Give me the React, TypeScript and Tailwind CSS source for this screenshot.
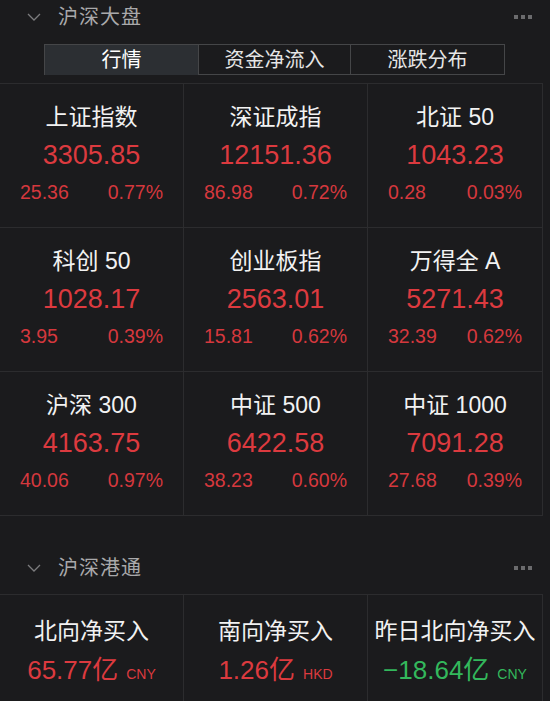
import React from 'react';

const FONT = '"Liberation Sans", "Noto Sans CJK SC", sans-serif';

const indices = [
  { name: '上证指数', value: '3305.85', chg: '25.36', pct: '0.77%' },
  { name: '深证成指', value: '12151.36', chg: '86.98', pct: '0.72%' },
  { name: '北证 50', value: '1043.23', chg: '0.28', pct: '0.03%' },
  { name: '科创 50', value: '1028.17', chg: '3.95', pct: '0.39%' },
  { name: '创业板指', value: '2563.01', chg: '15.81', pct: '0.62%' },
  { name: '万得全 A', value: '5271.43', chg: '32.39', pct: '0.62%' },
  { name: '沪深 300', value: '4163.75', chg: '40.06', pct: '0.97%' },
  { name: '中证 500', value: '6422.58', chg: '38.23', pct: '0.60%' },
  { name: '中证 1000', value: '7091.28', chg: '27.68', pct: '0.39%' },
];

const flows = [
  { name: '北向净买入', value: '65.77亿', unit: 'CNY', up: true },
  { name: '南向净买入', value: '1.26亿', unit: 'HKD', up: true },
  { name: '昨日北向净买入', value: '−18.64亿', unit: 'CNY', up: false },
];

const Chevron = () => (
  <svg width="14" height="8" viewBox="0 0 14 8" fill="none">
    <path d="M1 1 L7 7 L13 1" stroke="#7c7c7e" strokeWidth="1.3" />
  </svg>
);

const Dots = () => (
  <div className="flex gap-[3px]">
    <span className="w-[4px] h-[4px] bg-[#6b6b6d]" />
    <span className="w-[4px] h-[4px] bg-[#6b6b6d]" />
    <span className="w-[4px] h-[4px] bg-[#6b6b6d]" />
  </div>
);

const SectionHeader = ({ title }: { title: string }) => (
  <div className="flex items-center h-[34px] pl-[27px] pr-[18px]">
    <Chevron />
    <span className="ml-[17px] text-[20px] text-[#a9a9ab] tracking-[1px]">{title}</span>
    <div className="ml-auto">
      <Dots />
    </div>
  </div>
);

export default function App() {
  return (
    <div className="w-[550px] h-[701px] overflow-hidden bg-[#1b1b1d]" style={{ fontFamily: FONT }}>
      <SectionHeader title="沪深大盘" />

      <div className="mt-[10px] ml-[44px] w-[461px] h-[31px] grid grid-cols-3 border border-[#454648]">
        <div className="flex items-center justify-center bg-[#2c2f33] text-[20px] text-white">行情</div>
        <div className="flex items-center justify-center border-x border-[#454648] text-[20px] text-[#e6e6e6]">资金净流入</div>
        <div className="flex items-center justify-center text-[20px] text-[#e6e6e6]">涨跌分布</div>
      </div>

      <div className="mt-[8px] w-[543px] grid grid-cols-[183px_183px_1fr] gap-px bg-[#2c2c2e] border-y border-r border-[#2c2c2e]">
        {indices.map((it) => (
          <div key={it.name} className="h-[143px] bg-[#1b1b1d] flex flex-col items-center pt-[19px]">
            <div className="text-[23px] leading-[28px] text-[#f2f2f2]">{it.name}</div>
            <div className="mt-[9px] text-[27px] leading-[30px] text-[#dc3a3f]">{it.value}</div>
            <div className="mt-[11px] w-full px-[20px] flex justify-between text-[19.5px] leading-[22px] text-[#d5383d]">
              <span>{it.chg}</span>
              <span>{it.pct}</span>
            </div>
          </div>
        ))}
      </div>

      <div className="mt-[35px]">
        <SectionHeader title="沪深港通" />
      </div>

      <div className="mt-[9px] w-[543px] grid grid-cols-[183px_183px_1fr] gap-px bg-[#2c2c2e] border-t border-r border-[#2c2c2e]">
        {flows.map((f) => (
          <div key={f.name} className="h-[120px] bg-[#1b1b1d] flex flex-col items-center pt-[22px]">
            <div className="text-[23px] leading-[28px] text-[#f2f2f2]">{f.name}</div>
            <div className={`mt-[10px] flex items-baseline ${f.up ? 'text-[#dc3a3f]' : 'text-[#33b85c]'}`}>
              <span className="text-[26px] leading-[30px]">{f.value}</span>
              <span className="ml-[8px] text-[14px]">{f.unit}</span>
            </div>
          </div>
        ))}
      </div>
    </div>
  );
}
